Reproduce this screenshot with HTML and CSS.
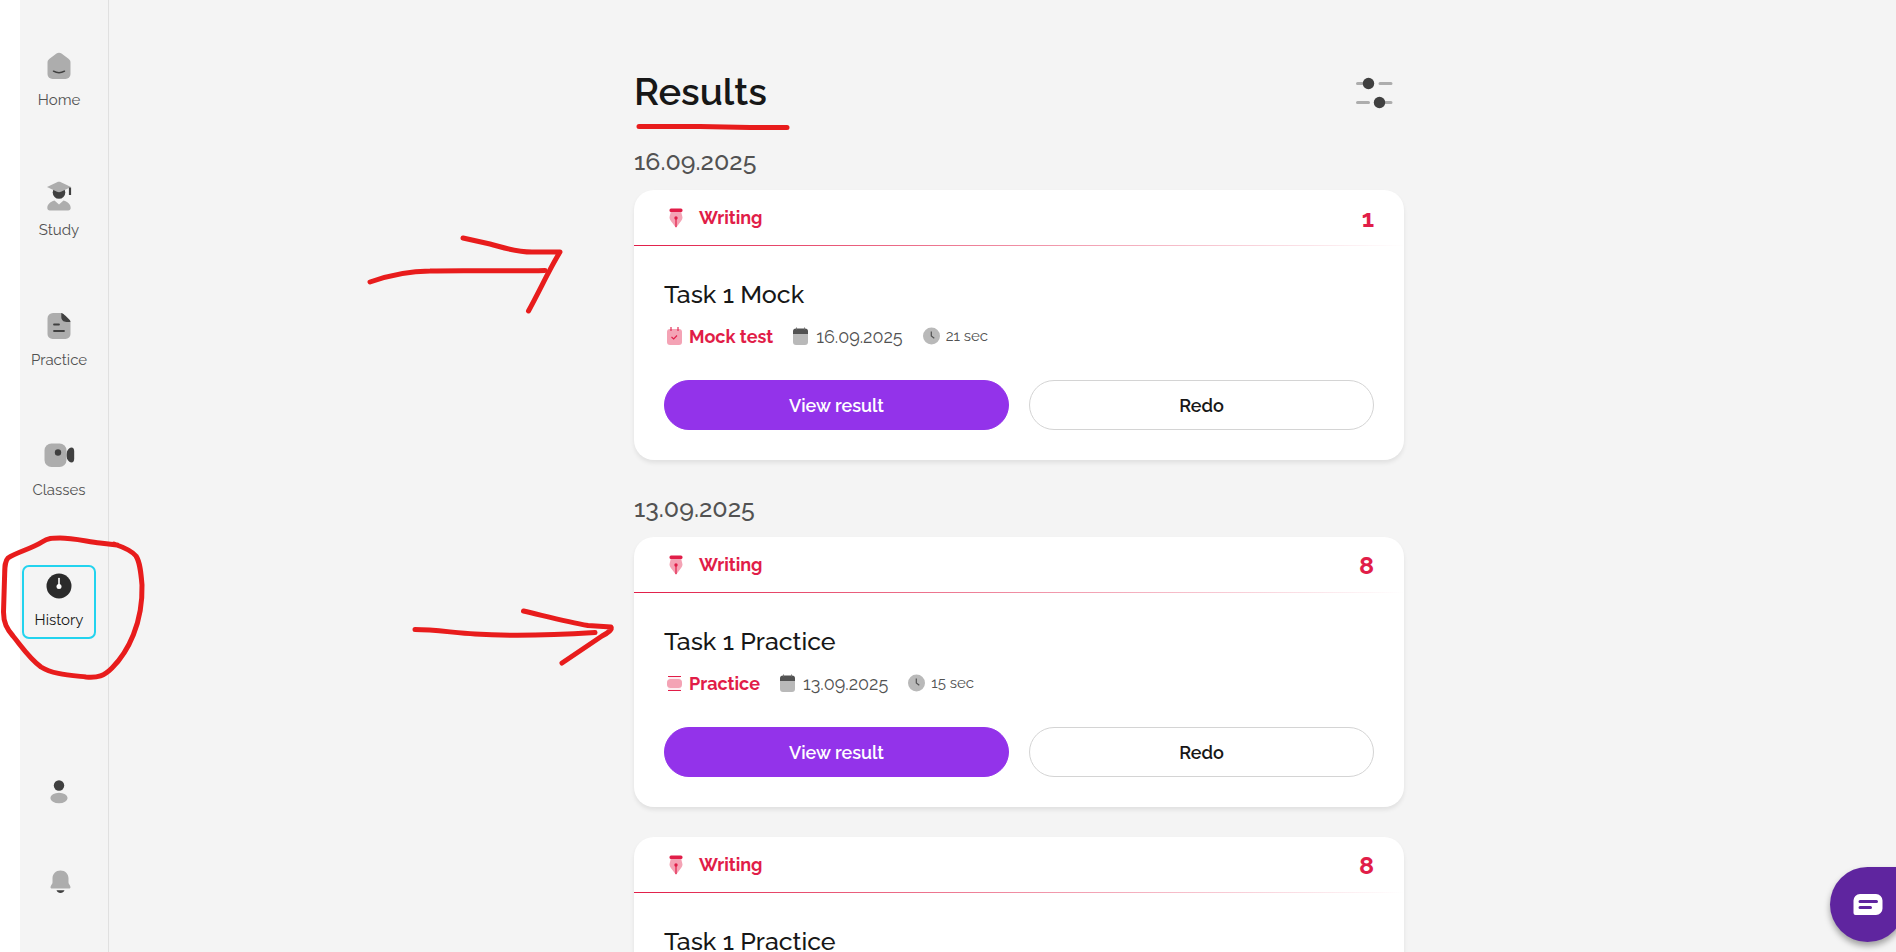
FILE: index.html
```html
<!DOCTYPE html>
<html lang="en">
<head>
    <meta charset="UTF-8">
    <meta name="viewport" content="width=device-width, initial-scale=1.0">
    <title>Results</title>
    <link rel="stylesheet" href="styles.css">
</head>
<body>

    <!-- shared icons -->
    <svg class="sprite" aria-hidden="true">
        <symbol id="pen" viewBox="0 0 24 24">
            <path d="M6.500 5h11c-.6 2 .8 4 1 6.500 0 3-3.500 5.500-6.500 10.500-3-5-6.500-7.500-6.500-10.500.2-2.500 1.600-4.500 1-6.500z" fill="#f4a3b5"/>
            <rect x="5.500" y="2.500" width="13" height="3.500" rx="1.500" fill="#e11d48"/>
            <circle cx="12" cy="12" r="1.700" fill="#e11d48"/>
            <path d="M12 12v9" stroke="#e11d48" stroke-width="1.200"/>
        </symbol>
        <symbol id="mock" viewBox="0 0 20 20">
            <rect x="3" y="3" width="15" height="16" rx="3" fill="#f4a3b5"/>
            <path d="M7 1v4M14 1v4M7.500 11l2.200 2 3.300-3.500" fill="none" stroke="#e11d48" stroke-width="1.100"/>
        </symbol>
        <symbol id="practice" viewBox="0 0 20 20">
            <rect x="3" y="6" width="15" height="9" rx="3.500" fill="#f4a3b5"/>
            <path d="M4 3.500h13M4 17.500h13" stroke="#e11d48" stroke-width="1.200"/>
            <path d="M4.500 16h12M5 5h11" stroke="#fbdbe2" stroke-width="1"/>
        </symbol>
        <symbol id="calendar" viewBox="0 0 20 20">
            <rect x="2" y="3" width="15" height="16" rx="3" fill="#b9b9b9"/>
            <path d="M2 8V5.500A3 3 0 0 1 5 2.500h9a3 3 0 0 1 3 3V8z" fill="#525252"/>
            <path d="M5.500 1.500v2M13.500 1.500v2" stroke="#777" stroke-width="1"/>
        </symbol>
        <symbol id="clock" viewBox="0 0 20 20">
            <circle cx="10.500" cy="10" r="8.500" fill="#b9b9b9"/>
            <path d="M10.300 5.500v4.500l3 2.200" fill="none" stroke="#525252" stroke-width="1.200"/>
        </symbol>
    </svg>

    <div class="app">
        <nav class="sidebar">
            <a href="#" class="nav-item">
                <svg width="32" height="32" viewBox="0 0 32 32">
                    <path d="M4.500 13c0-2 .5-3 2-4.200l7-5.300c1.500-1.100 3.500-1.100 5 0l7 5.300c1.500 1.200 2 2.200 2 4.200v11a5 5 0 0 1-5 5h-13a5 5 0 0 1-5-5z" fill="#adadad"/>
                    <path d="M10.500 21.200c3.500 2 7.500 2 11 0" fill="none" stroke="#404040" stroke-width="1.500" stroke-linecap="round"/>
                </svg>
                <span>Home</span>
            </a>
            <a href="#" class="nav-item">
                <svg width="32" height="32" viewBox="0 0 32 32">
                    <circle cx="16" cy="12.500" r="6.300" fill="#404040"/>
                    <path d="M4 7L14 2.200c1.300-.6 2.700-.6 4 0L28 7l-10 4.800c-1.300.6-2.700.6-4 0z" fill="#adadad"/>
                    <path d="M27 7.500v7.500" stroke="#404040" stroke-width="2.200"/>
                    <path d="M11.500 20.500l4.500 4 4.500-4c4.500 1.200 7.200 4 7.200 7.500 0 1.600-1 2.500-2.500 2.500H6.800c-1.500 0-2.500-.9-2.500-2.500 0-3.500 2.700-6.300 7.200-7.500z" fill="#adadad"/>
                </svg>
                <span>Study</span>
            </a>
            <a href="#" class="nav-item">
                <svg width="32" height="32" viewBox="0 0 32 32">
                    <path d="M10 3h9l8.500 9v12a5 5 0 0 1-5 5H9.500a5 5 0 0 1-5-5V8.500A5.500 5.500 0 0 1 10 3z" fill="#adadad"/>
                    <path d="M18.300 3c1.500.5 3 1.500 4.200 2.800l4 4c.6.700 1 1.400 1 2.200h-4c-3.200 0-5.200-2-5.200-5.200z" fill="#404040"/>
                    <path d="M11 14.500h5M11 21h10" stroke="#404040" stroke-width="1.800" stroke-linecap="round"/>
                </svg>
                <span>Practice</span>
            </a>
            <a href="#" class="nav-item">
                <svg width="32" height="32" viewBox="0 0 32 32">
                    <rect x="1.500" y="3.500" width="22" height="23.500" rx="7" fill="#adadad"/>
                    <circle cx="15" cy="12.500" r="3.200" fill="#404040"/>
                    <path d="M24 11.500c1-2.500 3-4 4.500-4 1.800 0 2.700 1.500 2.700 4v7c0 2.500-.9 4-2.700 4-1.500 0-3.500-1.500-4.500-4-.5-2.500-.5-4.500 0-7z" fill="#404040"/>
                </svg>
                <span>Classes</span>
            </a>
            <a href="#" class="nav-item active" aria-current="page">
                <svg width="32" height="32" viewBox="0 0 32 32">
                    <circle cx="16" cy="16" r="12.500" fill="#2b2b2b"/>
                    <path d="M16 8.500V16" stroke="#fff" stroke-width="1.600" stroke-linecap="round"/>
                    <circle cx="16" cy="16.500" r="2.500" fill="#fff"/>
                </svg>
                <span>History</span>
            </a>
            <div class="nav-bottom">
                <button type="button" class="icon-btn" aria-label="Profile">
                    <svg width="32" height="32" viewBox="0 0 32 32">
                        <circle cx="16" cy="11.500" r="5.200" fill="#404040"/>
                        <ellipse cx="16" cy="24" rx="8.600" ry="5.200" fill="#adadad"/>
                    </svg>
                </button>
                <button type="button" class="icon-btn" aria-label="Notifications">
                    <svg width="32" height="32" viewBox="0 0 32 32">
                        <path d="M17.500 4.500c4.700 0 8 3.500 8 8v4c0 1.500 2 3.200 2 4.700 0 .8-.7 1.300-1.500 1.300H9c-.8 0-1.500-.5-1.500-1.300 0-1.500 2-3.200 2-4.700v-4c0-4.500 3.300-8 8-8z" fill="#adadad"/>
                        <path d="M13.500 24.200h8c-.7 1.800-2.200 2.800-4 2.800s-3.300-1-4-2.800z" fill="#404040"/>
                    </svg>
                </button>
            </div>
        </nav>

        <main class="content">
            <div class="results">
                <header class="results-header">
                    <h1>Results</h1>
                    <button type="button" class="icon-btn" aria-label="Filter">
                        <svg width="60" height="40" viewBox="0 0 60 40">
                            <path d="M13.500 11.500h6M36 11.500h11M13.500 30.500h11M41 30.500h6" stroke="#adadad" stroke-width="3" stroke-linecap="round"/>
                            <circle cx="24.500" cy="11.500" r="5.700" fill="#404040"/>
                            <circle cx="35.500" cy="30.500" r="5.700" fill="#404040"/>
                        </svg>
                    </button>
                </header>

                <section class="day">
                    <h2>16.09.2025</h2>
                    <article class="card">
                        <div class="card-top">
                            <svg width="24" height="24"><use href="#pen"/></svg>
                            <span>Writing</span>
                            <strong>1</strong>
                        </div>
                        <div class="card-body">
                            <h3>Task 1 Mock</h3>
                            <div class="meta">
                                <span class="kind"><svg width="20" height="20"><use href="#mock"/></svg>Mock test</span>
                                <span class="date"><svg width="20" height="20"><use href="#calendar"/></svg>16.09.2025</span>
                                <span class="time"><svg width="20" height="20"><use href="#clock"/></svg>21 sec</span>
                            </div>
                            <div class="actions">
                                <button type="button" class="btn primary">View result</button>
                                <button type="button" class="btn">Redo</button>
                            </div>
                        </div>
                    </article>
                </section>

                <section class="day">
                    <h2>13.09.2025</h2>
                    <article class="card">
                        <div class="card-top">
                            <svg width="24" height="24"><use href="#pen"/></svg>
                            <span>Writing</span>
                            <strong>8</strong>
                        </div>
                        <div class="card-body">
                            <h3>Task 1 Practice</h3>
                            <div class="meta">
                                <span class="kind"><svg width="20" height="20"><use href="#practice"/></svg>Practice</span>
                                <span class="date"><svg width="20" height="20"><use href="#calendar"/></svg>13.09.2025</span>
                                <span class="time"><svg width="20" height="20"><use href="#clock"/></svg>15 sec</span>
                            </div>
                            <div class="actions">
                                <button type="button" class="btn primary">View result</button>
                                <button type="button" class="btn">Redo</button>
                            </div>
                        </div>
                    </article>
                    <article class="card">
                        <div class="card-top">
                            <svg width="24" height="24"><use href="#pen"/></svg>
                            <span>Writing</span>
                            <strong>8</strong>
                        </div>
                        <div class="card-body">
                            <h3>Task 1 Practice</h3>
                        </div>
                    </article>
                </section>
            </div>
        </main>
    </div>

    <button type="button" class="chat" aria-label="Open chat">
        <svg width="30" height="22" viewBox="0 0 30 22">
            <path d="M7 0h16a6.500 6.500 0 0 1 6.500 6.500v8A6.500 6.500 0 0 1 23 21H2.500A2 2 0 0 1 .5 19V6.500A6.500 6.500 0 0 1 7 0z" fill="#fff"/>
            <path d="M7 7.500h16.500M7 13.500h10.500" stroke="#5f259f" stroke-width="3" stroke-linecap="round"/>
        </svg>
    </button>

    <!-- hand drawn marks -->
    <svg class="marks" aria-hidden="true">
        <path d="M639 126.500L700 126.500 750 127.500 787 127.500"/>
        <path d="M370 282C390 275 408 271 430 271C465 270 510 271.500 545 270.500"/>
        <path d="M463 238L490 244C505 248 515 252 532 252L560 252C550 268 541 288 528.500 311"/>
        <path d="M415 629.500C435 629.500 455 633 475 634C515 636.500 555 635 595 632.500"/>
        <path d="M523.500 611C545 616 567 622 588 625.500L611 627C613 629 608 633 602 636L562 663"/>
        <path d="M117 545L100 543C85 541 72 538 60 538C52 538 48 538 42 542C31 549 17 552 8 558C4 562 5 570 4.500 579L3.500 612C3.500 623 7 629 13 636C22 647 29 658 41 667C52 674 68 675 86 677C98 678 104 676 112 668C128 652 143 623 142 585C141 573 140 562 136 556C131 550 123 547 114 544"/>
    </svg>

</body>
</html>
```

FILE: styles.css
```css
* {
    box-sizing: border-box;
}
body {
    margin: 0;
    font-family: Raleway, Lato, sans-serif;
    font-variant-numeric: oldstyle-nums;
    font-size: 18px;
    color: #171717;
    background-color: #fff;
}
h1, h2, h3 {
    margin: 0;
}
button {
    font: inherit;
    color: inherit;
    cursor: pointer;
}
svg {
    display: block;
    flex-shrink: 0;
}
.sprite {
    position: absolute;
    width: 0;
    height: 0;
}
.app {
    display: flex;
    height: 100vh;
    margin-left: 20px;
    overflow: hidden;
    background-color: #f4f4f4;
}

/* Sidebar */
.sidebar {
    display: flex;
    flex-direction: column;
    align-items: center;
    gap: 56px;
    width: 89px;
    padding: 45px 12px 54px 2px;
    border-right: 1px solid #e0e0e0;
}
.nav-item {
    display: flex;
    flex-direction: column;
    align-items: center;
    gap: 6px;
    width: 74px;
    height: 74px;
    padding-top: 3px;
    border: 2px solid transparent;
    border-radius: 7px;
    font-size: 15px;
    line-height: 24px;
    color: #525252;
    text-decoration: none;
}
.nav-item.active {
    border-color: #22d3ee;
    color: #171717;
}
.nav-bottom {
    display: flex;
    flex-direction: column;
    gap: 60px;
    margin-top: auto;
}
.icon-btn {
    padding: 0;
    border: none;
    background: none;
}

/* Results */
.content {
    flex: 1;
    padding: 68px 0 0 33px;
}
.results {
    max-width: 770px;
    margin: 0 auto;
}
.results-header {
    display: flex;
    justify-content: space-between;
    align-items: center;
    height: 48px;
    margin-bottom: 27px;
}
.results-header h1 {
    font-size: 38px;
    line-height: 48px;
    font-weight: 600;
}
.day {
    margin-bottom: 30px;
}
.day h2 {
    margin-bottom: 11px;
    font-size: 25px;
    line-height: 36px;
    font-weight: 500;
    color: #525252;
}
.card {
    height: 270px;
    margin-bottom: 30px;
    border-radius: 20px;
    background-color: #fff;
    box-shadow: 0 3px 4px rgba(0, 0, 0, 0.08);
}
.card-top {
    display: flex;
    align-items: center;
    gap: 11px;
    height: 56px;
    padding: 0 30px;
    border-bottom: 1px solid;
    border-image: linear-gradient(to right, #e11d48, transparent) 1;
    font-weight: 700;
    color: #e11d48;
}
.card-top strong {
    margin-left: auto;
    font-size: 25px;
    line-height: 32px;
    font-weight: 700;
}
.card-body {
    padding: 30px;
}
.card-body h3 {
    font-size: 25px;
    line-height: 36px;
    font-weight: 500;
}
.meta {
    display: flex;
    align-items: center;
    gap: 18px;
    height: 24px;
    margin: 12px 0 32px;
    color: #525252;
}
.meta span {
    display: flex;
    align-items: center;
    gap: 5px;
}
.meta .kind {
    font-weight: 700;
    color: #e11d48;
}
.meta .time {
    font-size: 15px;
}
.actions {
    display: flex;
    gap: 20px;
}
.btn {
    flex: 1;
    height: 50px;
    border: 1px solid #d4d4d4;
    border-radius: 25px;
    background-color: #fff;
    font-weight: 600;
}
.btn.primary {
    border-color: #9333ea;
    background-color: #9333ea;
    color: #fff;
}

/* Chat button */
.chat {
    position: fixed;
    right: -9px;
    bottom: 10px;
    display: flex;
    justify-content: center;
    align-items: center;
    width: 75px;
    height: 75px;
    padding: 0;
    border: none;
    border-radius: 50% 0 50% 50%;
    background-color: #5f259f;
    box-shadow: 0 4px 6px rgba(0, 0, 0, 0.35);
}

.marks {
    position: fixed;
    top: 0;
    left: 0;
    width: 100%;
    height: 100%;
    pointer-events: none;
    fill: none;
    stroke: #e81c1c;
    stroke-width: 5;
    stroke-linecap: round;
    stroke-linejoin: round;
}
```
